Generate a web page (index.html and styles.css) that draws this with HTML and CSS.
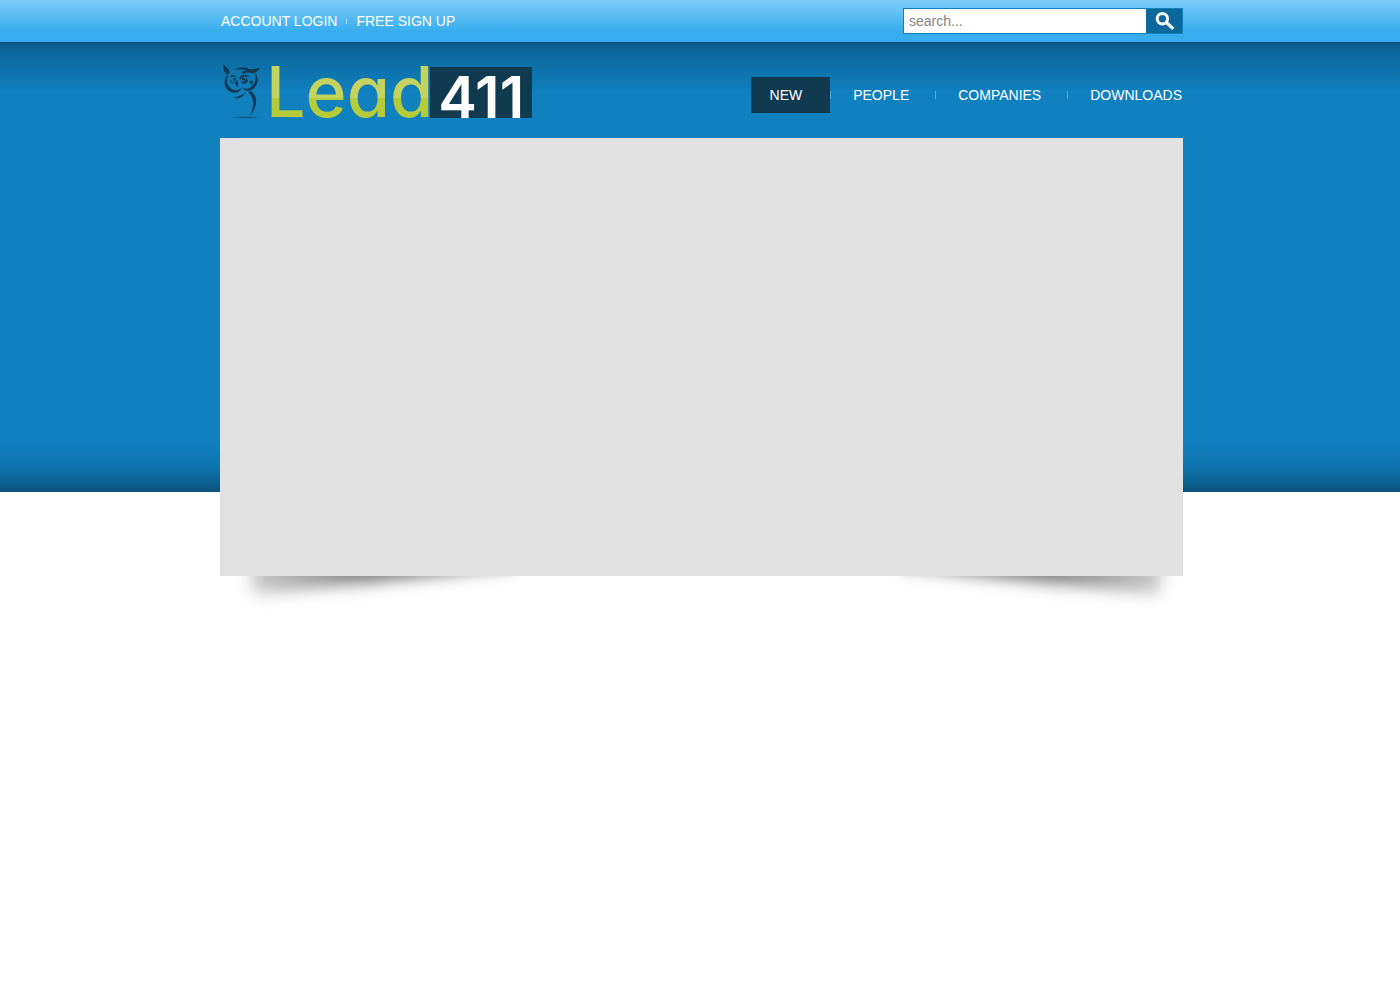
FILE: index.html
```html
<!DOCTYPE html>
<html lang="en">
<head>
    <meta charset="UTF-8">
    <meta name="viewport" content="width=device-width, initial-scale=1.0">
    <title>Lead411</title>
    <link rel="stylesheet" href="styles.css">
</head>
<body>
    <div class="topbar">
        <div class="container topbar-inner">
            <ul class="account-links">
                <li><a href="#">ACCOUNT LOGIN</a></li>
                <li><a href="#">FREE SIGN UP</a></li>
            </ul>
            <form class="search" role="search">
                <input type="text" placeholder="search..." aria-label="Search">
                <button type="submit" aria-label="Search">
                    <svg width="20" height="20" viewBox="0 0 20 20" fill="none" stroke="#fff">
                        <circle cx="8.4" cy="7.8" r="5.2" stroke-width="3"/>
                        <path d="M12.2 11.4 L19.2 17.8" stroke-width="3.2"/>
                    </svg>
                </button>
            </form>
        </div>
    </div>

    <div class="banner">
        <div class="container">
            <div class="header">
                <a class="logo" href="#">
                    <svg class="owl" width="46" height="60" viewBox="0 0 46 60" fill="#103a52">
                        <defs>
                            <radialGradient id="ground">
                                <stop offset="0" stop-color="#0b5582"/>
                                <stop offset="1" stop-color="#0b5582" stop-opacity="0"/>
                            </radialGradient>
                        </defs>
                        <ellipse cx="26" cy="55.5" rx="18" ry="1.4" fill="url(#ground)"/>
                        <!-- ears and brow -->
                        <path d="M3.5 2 C5 5 9 6 9.5 10 L8 13 C4 11 3 7 3.5 2Z"/>
                        <path d="M15 8 C19 5 24 5 29 7 C33 8 36 6 40 6 C38 9 36 11 32 11 C27 8 21 6 15 8Z"/>
                        <path d="M22 10 C27 7 32 8 36 12 C31 10 26 10 22 12Z"/>
                        <!-- face -->
                        <path d="M7 13 C3 19 4 27 11 30 C16 32 20 30 22 26 C19 28 15 29 12 27 C7 24 6 19 8 14Z"/>
                        <path d="M10 14 C13 12 16 13 17 17 C15 14 13 14 10 15Z"/>
                        <path d="M10 17 C10 21 13 23 16 20 C14 21 11 20 10 17Z"/>
                        <path d="M13 16 L16 17 L15 19 L13 18Z"/>
                        <path d="M17 18 C18.5 20 18.5 22 17.5 25 C15 23 14.5 21 17 18Z"/>
                        <path d="M19 16 C22 12 27 12 30 15 C26 14 23 14 20 18Z"/>
                        <path d="M26 16 C29 18 28 21 25 21.5 C23 22 21 21 20 19 C23 21 26 20 26 16Z"/>
                        <path d="M22 16 L25 16 L25 19 L22 18Z"/>
                        <!-- back and wing -->
                        <path d="M36 12 C39 17 38 23 33 27 C29 30 24 29 22 25 C26 28 30 27 33 23 C36 19 36 16 35 13Z"/>
                        <path d="M29 20 L33 18 L32 23Z"/>
                        <path d="M31 29 C39 35 37 45 30 54 C34 45 35 36 28 30Z"/>
                        <path d="M13 35 C18 35 23 33 27 29 C24 34 19 37 15 37 C18 36 20 35 22 34 C19 36 16 36 13 35Z"/>
                    </svg>
                    <span class="logo-name">Lead</span>
                    <span class="logo-number">411</span>
                </a>
                <ul class="nav">
                    <li><a class="active" href="#">NEW</a></li>
                    <li><a href="#">PEOPLE</a></li>
                    <li><a href="#">COMPANIES</a></li>
                    <li><a href="#">DOWNLOADS</a></li>
                </ul>
            </div>
            <div class="slider-wrap">
                <div class="slider"></div>
            </div>
        </div>
    </div>
</body>
</html>
```

FILE: styles.css
```css
body {
    font-family: "Liberation Sans", Arial, sans-serif;
    font-size: 14px;
    margin: 0;
    padding: 0;
    background-color: #fff;
}
a {
    color: #fff;
    text-decoration: none;
}
ul {
    list-style: none;
    margin: 0;
    padding: 0;
}
.container {
    max-width: 963px;
    margin: 0 auto;
    padding-left: 3px;
}

/* top bar */
.topbar {
    background: linear-gradient(#7bcdf9, #38adee 75%, #38adee);
}
.topbar-inner {
    display: flex;
    justify-content: space-between;
    align-items: center;
    height: 42px;
}
.account-links {
    display: flex;
    align-items: center;
    padding-left: 1px;
}
.account-links li {
    display: flex;
    align-items: center;
}
.account-links li + li::before {
    content: "";
    width: 1px;
    height: 5px;
    margin: 0 9px;
    background: #a6dbf8;
}
.search {
    display: flex;
    box-sizing: border-box;
    width: 280px;
    height: 26px;
    border: 1px solid #1080bf;
}
.search input {
    flex: 1;
    min-width: 0;
    border: none;
    padding: 0 5px;
    font-family: inherit;
    font-size: 14px;
    background: #fff;
    outline: none;
}
.search input::placeholder {
    color: #858585;
}
.search button {
    display: flex;
    align-items: center;
    justify-content: center;
    width: 36px;
    padding: 0;
    border: none;
    background: #0b689b;
    cursor: pointer;
}

/* blue banner */
.banner {
    padding-bottom: 60px;
    background: linear-gradient(#0a567f, #0c6799 8px, #1080bf 50px, #1080bf 400px, #0e74ae 425px, #0a547d) no-repeat;
    background-size: 100% 450px;
}
.header {
    display: flex;
    justify-content: space-between;
    align-items: center;
    box-sizing: border-box;
    height: 96px;
    padding-top: 4px;
}
.logo {
    display: flex;
    align-items: center;
    font-family: Inter, Lato, sans-serif;
    font-weight: 500;
    line-height: 60px;
}
.logo-name {
    font-size: 70px;
    font-feature-settings: "cv11";
    color: transparent;
    background: linear-gradient(#c3d35d 36px, #b5cb3a 36px);
    -webkit-background-clip: text;
    background-clip: text;
}
.logo-number {
    width: 102px;
    height: 51px;
    margin-left: -3px;
    font-size: 58px;
    font-weight: 600;
    line-height: 60px;
    text-align: center;
    background: #103a50;
}
.nav {
    display: flex;
    margin-top: 6px;
    line-height: 36px;
}
.nav li {
    display: flex;
    align-items: center;
}
.nav li + li::before {
    content: "";
    width: 1px;
    height: 8px;
    background: #58a9d6;
}
.nav a {
    padding: 0 26px 0 22px;
}
.nav .active {
    padding: 0 28px 0 19px;
    background: #103a50;
}
.nav li:last-child a {
    padding-right: 1px;
}

/* slider with lifted corners */
.slider-wrap {
    position: relative;
    z-index: 0;
}
.slider {
    height: 438px;
    background: #e1e1e1;
}
.slider-wrap::before,
.slider-wrap::after {
    content: "";
    position: absolute;
    z-index: -1;
    bottom: -5px;
    left: 30px;
    width: 260px;
    height: 50px;
    background: linear-gradient(to right, #ccc, #787878 45%);
    filter: blur(8px);
    transform: rotate(-6deg);
}
.slider-wrap::after {
    left: auto;
    right: 20px;
    background: linear-gradient(to left, #ccc, #787878 45%);
    transform: rotate(6deg);
}
```
